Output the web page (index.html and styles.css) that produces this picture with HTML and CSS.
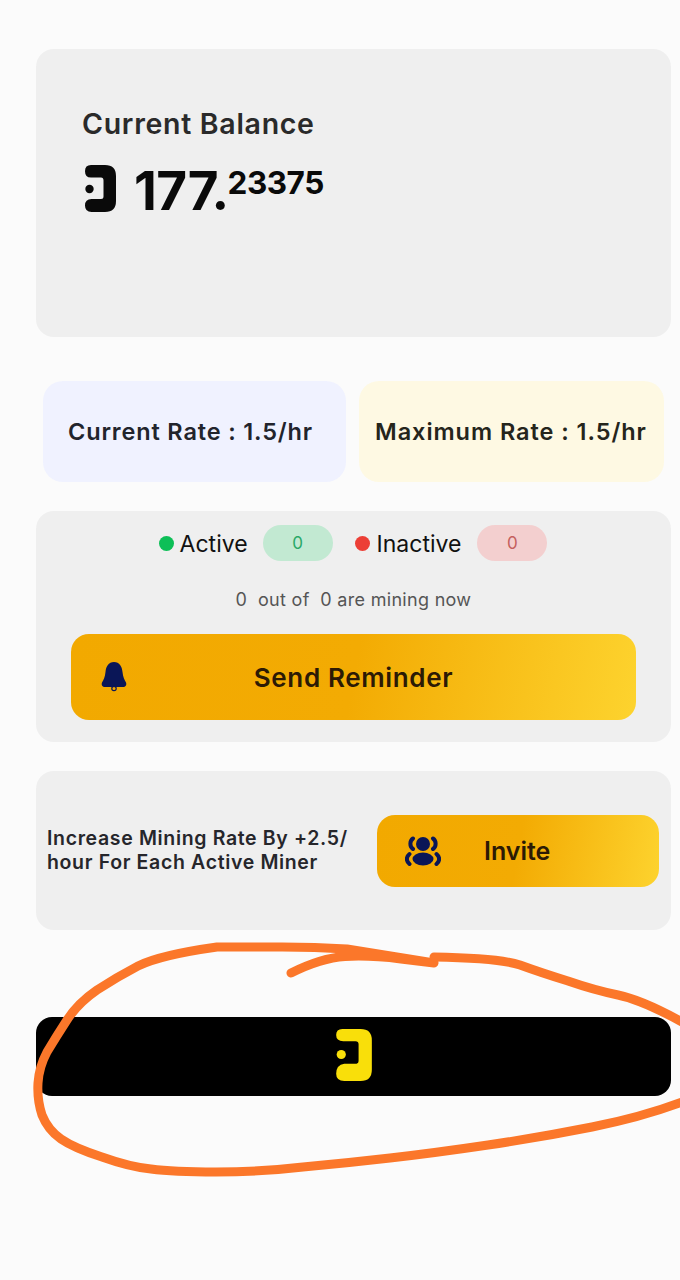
FILE: index.html
```html
<!DOCTYPE html>
<html lang="en">

<head>
    <meta charset="UTF-8">
    <meta name="viewport" content="width=device-width, initial-scale=1.0">
    <title>Mining Dashboard</title>
    <link rel="stylesheet" href="styles.css">
</head>

<body>
    <div class="page">
        <div class="card balance">
            <h2>Current Balance</h2>
            <div class="amount">
                <svg class="logo logo-dark" viewBox="0 0 31 47">
                    <path d="M6 0H20Q31 0 31 11V36Q31 47 20 47H6.5Q0 47 0 40.5Q0 34 6.5 34H16Q18.5 34 18.5 31.5V15.5Q18.5 12.5 16 12.5H6Q0 12.5 0 6.2Q0 0 6 0Z" />
                    <circle cx="4.5" cy="24" r="4.2" />
                </svg>
                <span class="whole">177.</span><span class="fraction">23375</span>
            </div>
        </div>

        <div class="rates">
            <div class="rate rate-blue">Current Rate : 1.5/hr</div>
            <div class="rate rate-yellow">Maximum Rate : 1.5/hr</div>
        </div>

        <div class="card miners">
            <div class="status-row">
                <span class="dot dot-green"></span>
                <span class="status-label">Active</span>
                <span class="pill pill-green">0</span>
                <span class="dot dot-red"></span>
                <span class="status-label">Inactive</span>
                <span class="pill pill-red">0</span>
            </div>
            <p class="mining-now">0&nbsp; out of &nbsp;0 are mining now</p>
            <button class="btn btn-reminder">
                <svg class="icon-bell" viewBox="0 0 28 30">
                    <path d="M14 0C8.5 0 6 4.5 5.5 10C5 15 3.5 18 2 20.5C1 23 2.5 25 5 25H23C25.5 25 27 23 26 20.5C24.5 18 23 15 22.5 10C22 4.5 19.5 0 14 0Z" />
                    <circle cx="14" cy="26.5" r="2.2" class="ring" />
                </svg>
                <span>Send Reminder</span>
            </button>
        </div>

        <div class="card invite">
            <p>Increase Mining Rate By +2.5/<br>hour For Each Active Miner</p>
            <button class="btn btn-invite">
                <svg class="icon-users" viewBox="0 0 36 30">
                    <circle cx="18" cy="8" r="7" />
                    <path d="M8 2.5C4.5 5 4.5 10.500 8 13M28 2.5C31.500 5 31.500 10.500 28 13" class="arc" />
                    <ellipse cx="18" cy="23" rx="10.5" ry="6.5" />
                    <path d="M4.5 18C1 21 1 25 4.5 28M31.500 18C35 21 35 25 31.500 28" class="arc" />
                </svg>
                <span>Invite</span>
            </button>
        </div>

        <div class="bar">
            <svg class="logo logo-yellow" viewBox="0 0 35 51">
                <path d="M6 0H24Q35 0 35 11V40Q35 51 24 51H8Q0 51 0 44Q0 35 8 34H20Q22 34 22 31V15Q22 12 19 12H7Q0 12 0 6Q0 0 6 0Z" />
                <circle cx="5" cy="25" r="4.5" />
            </svg>
        </div>

        <!-- hand drawn circle on top of the screenshot -->
        <svg class="scribble" viewBox="0 0 680 1280">
            <path d="M291 973Q321 958 345 956.500Q369 955 401 959L434 963L347 949Q315 947 282 947Q250 947 217 947Q160 955 138 966Q117 977 97 990Q78 1003 67 1020Q56 1037 47 1052Q39 1067 38 1083Q37 1100 42 1115Q48 1130 61 1139Q74 1148 102 1157Q130 1167 151 1169Q173 1172 216 1172Q260 1172 303 1167Q347 1163 390 1158Q434 1153 488 1145Q542 1137 592 1127Q642 1117 682 1102" />
            <path d="M434 957Q499 958 520 965Q542 973 568 981Q594 990 618 995Q642 1000 682 1022" />
        </svg>
    </div>
</body>

</html>
```
FILE: styles.css
```css
* {
    margin: 0;
    padding: 0;
    box-sizing: border-box;
    font-family: "Inter", "Liberation Sans", sans-serif;
}

body {
    background-color: #fbfbfb;
}

.page {
    position: relative;
    height: 1280px;
    overflow: hidden;
    padding: 49px 9px 0 36px;
    display: flex;
    flex-direction: column;
}

.card {
    background-color: #efefef;
    border-radius: 18px;
}

/* balance */
.balance {
    height: 288px;
    padding: 57px 46px 0;
}

.balance h2 {
    font-size: 28.5px;
    line-height: 36px;
    font-weight: 600;
    letter-spacing: 0.7px;
    color: #2a2a2a;
}

.amount {
    display: flex;
    align-items: flex-start;
    margin-top: 22px;
    color: #0a0a0a;
}

.logo {
    display: block;
    fill: currentColor;
}

.logo-dark {
    width: 31px;
    height: 47px;
    margin: 1px 18px 0 3px;
}

.whole {
    font-size: 53px;
    line-height: 54px;
    font-weight: 700;
    letter-spacing: -0.5px;
}

.fraction {
    font-size: 31.5px;
    line-height: 34px;
    font-weight: 700;
    margin: 2px 0 0 -1px;
    letter-spacing: -0.5px;
}

/* rates */
.rates {
    display: flex;
    gap: 13px;
    margin: 44px 7px 29px;
}

.rate {
    height: 101px;
    border-radius: 20px;
    display: flex;
    align-items: center;
    font-size: 23.5px;
    font-weight: 600;
    color: #22242c;
}

.rate-blue {
    width: 303px;
    padding-left: 25px;
    background-color: #f0f2ff;
    letter-spacing: 0.85px;
}

.rate-yellow {
    width: 305px;
    padding-left: 16px;
    background-color: #fef9e3;
    color: #25251c;
    letter-spacing: 0.95px;
}

/* active / inactive */
.miners {
    height: 231px;
    padding: 14px 35px 0;
}

.status-row {
    display: flex;
    align-items: center;
    justify-content: center;
    height: 36px;
    padding-right: 1px;
}

.dot {
    width: 15px;
    height: 15px;
    border-radius: 50%;
    margin-right: 6px;
}

.dot-green {
    background-color: #0dbf57;
}

.dot-red {
    background-color: #ec3f36;
    margin-left: 22px;
    margin-right: 7px;
}

.status-label {
    font-size: 23px;
    line-height: 36px;
    padding-top: 2px;
    color: #111111;
}

.pill {
    width: 70px;
    height: 36px;
    border-radius: 18px;
    margin-left: 15px;
    display: flex;
    align-items: center;
    justify-content: center;
    font-size: 17px;
}

.pill-green {
    background-color: #c2e9d2;
    color: #2aa868;
}

.pill-red {
    background-color: #f3cfcf;
    color: #c4605e;
    margin-left: 16px;
}

.mining-now {
    text-align: center;
    font-size: 18px;
    line-height: 22px;
    letter-spacing: 0.3px;
    color: #555555;
    margin: 28px 0 23px;
}

.btn {
    border: none;
    border-radius: 18px;
    background: linear-gradient(100deg, #f2a900 0%, #f3ab03 50%, #fdd32e 100%);
    color: #2c1a05;
    font-weight: 600;
    width: 100%;
}

.btn-reminder {
    height: 86px;
    font-size: 26px;
    letter-spacing: 0.65px;
    padding: 0 29px;
    display: grid;
    grid-template-columns: 1fr auto 1fr;
    align-items: center;
}

.icon-bell {
    width: 28px;
    height: 30px;
    fill: #0a1657;
}

.icon-bell .ring {
    fill: none;
    stroke: #0a1657;
    stroke-width: 1.2;
}

/* invite */
.invite {
    height: 159px;
    margin-top: 29px;
    padding: 44px 12px 0 11px;
    display: flex;
    align-items: flex-start;
}

.invite p {
    width: 330px;
    margin-top: 11px;
    font-size: 19.5px;
    line-height: 24px;
    font-weight: 600;
    letter-spacing: 0.65px;
    color: #26262b;
}

.btn-invite {
    flex: none;
    width: 282px;
    height: 72px;
    font-size: 25px;
    display: flex;
    align-items: center;
    gap: 43px;
    padding-left: 28px;
}

.icon-users {
    width: 36px;
    height: 30px;
    fill: #0a1657;
}

.icon-users .arc {
    fill: none;
    stroke: #0a1657;
    stroke-width: 4;
    stroke-linecap: round;
}

/* black bar */
.bar {
    height: 79px;
    margin-top: 87px;
    background-color: #000000;
    border-radius: 16px;
    display: flex;
    align-items: center;
    justify-content: center;
    color: #f9df0a;
}

.logo-yellow {
    width: 36px;
    height: 52px;
    margin-bottom: 4px;
}

.scribble {
    position: absolute;
    left: 0;
    top: 0;
    width: 680px;
    height: 1280px;
    fill: none;
    stroke: #fb772a;
    stroke-width: 9;
    stroke-linecap: round;
    stroke-linejoin: round;
}
```
